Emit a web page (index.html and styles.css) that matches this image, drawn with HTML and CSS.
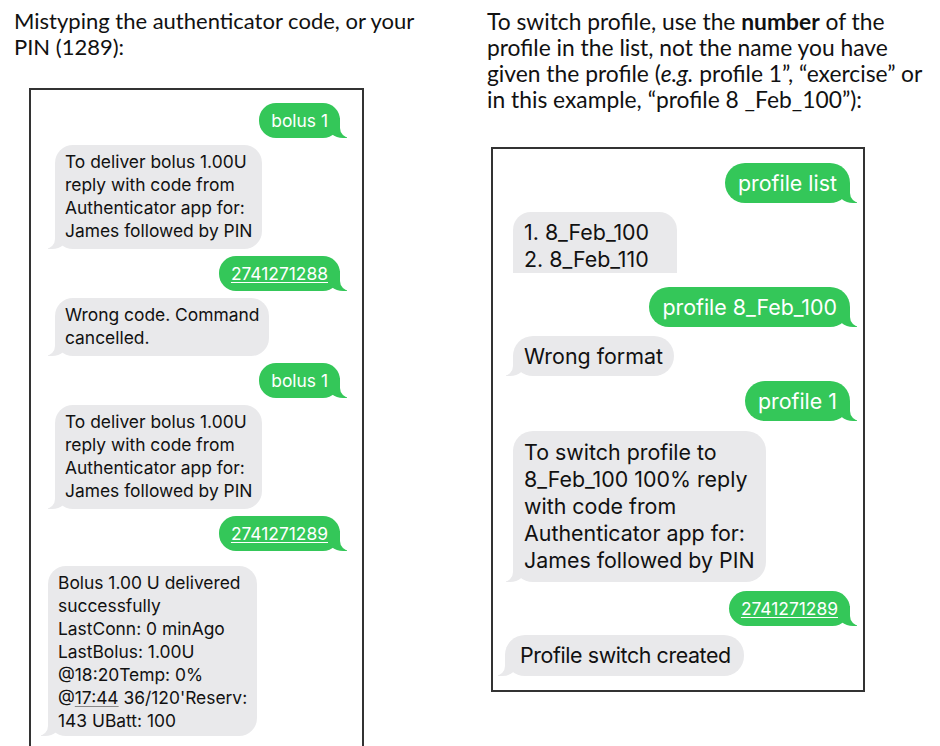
FILE: index.html
```html
<!DOCTYPE html>
<html lang="en">
<head>
<meta charset="utf-8">
<title>SMS commands</title>
<link rel="stylesheet" href="styles.css">
</head>
<body>
<main class="page">
  <section class="col col-left">
    <p class="heading">Mistyping the authenticator code, or your PIN (1289):</p>
    <div class="phone phone-left">
      <div class="msg sent">bolus 1</div>
      <div class="msg recv">To deliver bolus 1.00U<br>reply with code from<br>Authenticator app for:<br>James followed by PIN</div>
      <div class="msg sent"><u>2741271288</u></div>
      <div class="msg recv">Wrong code. Command<br>cancelled.</div>
      <div class="msg sent">bolus 1</div>
      <div class="msg recv">To deliver bolus 1.00U<br>reply with code from<br>Authenticator app for:<br>James followed by PIN</div>
      <div class="msg sent"><u>2741271289</u></div>
      <div class="msg recv recv-wide">Bolus 1.00 U delivered<br>successfully<br>LastConn: 0 minAgo<br>LastBolus: 1.00U<br>@18:20Temp: 0%<br>@<u class="dotted">17:44</u> 36/120'Reserv:<br>143 UBatt: 100</div>
    </div>
  </section>
  <section class="col col-right">
    <p class="heading">To switch profile, use the <b>number</b> of the profile in the list, not the name you have given the profile (<i>e.g.</i> profile 1”, “exercise” or in this example, “profile 8 _Feb_100”):</p>
    <div class="phone phone-right">
      <div class="msg sent">profile list</div>
      <div class="msg recv cut">1. 8_Feb_100<br>2. 8_Feb_110</div>
      <div class="msg sent">profile 8_Feb_100</div>
      <div class="msg recv">Wrong format</div>
      <div class="msg sent tight">profile 1</div>
      <div class="msg recv tall">To switch profile to<br>8_Feb_100 100% reply<br>with code from<br>Authenticator app for:<br>James followed by PIN</div>
      <div class="msg sent small"><u>2741271289</u></div>
      <div class="msg recv shift">Profile switch created</div>
    </div>
  </section>
</main>
</body>
</html>
```

FILE: styles.css
```css
html, body {
  margin: 0;
  padding: 0;
  background: #ffffff;
}

.page {
  display: flex;
  width: 940px;
  height: 746px;
  overflow: hidden;
}

.col-left {
  flex: 0 0 487px;
  padding-left: 14px;
  box-sizing: border-box;
}

.col-right {
  flex: 0 0 453px;
}

.heading {
  margin: 8px 0 0 0;
  font-family: Lato, "Liberation Sans", sans-serif;
  font-size: 22.8px;
  line-height: 26px;
  color: #111;
}

.col-left .heading { width: 410px; font-size: 22px; }
.col-right .heading { width: 445px; }

.phone {
  display: flex;
  flex-direction: column;
  align-items: flex-start;
  border: 2px solid #333;
  box-sizing: border-box;
  font-family: Inter, "Liberation Sans", sans-serif;
  color: #111;
}

.phone-left {
  margin: 28px 0 0 15px;
  width: 335px;
  height: 660px;
  padding: 13px 22px 0 24px;
  gap: 7px;
  font-size: 17.4px;
  line-height: 23px;
}

.phone-right {
  margin: 35px 0 0 4px;
  width: 374px;
  height: 545px;
  padding: 14px 13px 0 20px;
  gap: 9px;
  font-size: 21.4px;
  line-height: 27px;
}

.msg {
  position: relative;
  z-index: 0;
  border-radius: 18px;
  padding: 6px 11px;
}

.sent {
  align-self: flex-end;
  background: #34c759;
  color: #fff;
}

.recv {
  background: #e9e9eb;
  color: #111;
}

.phone-left .sent { padding: 6px 12px; border-radius: 17px; }
.phone-left .recv { padding: 5px 10px 7px 10px; }
.phone-left .recv-wide { margin-left: -7px; margin-top: 8px; padding: 5px 10px 4px 10px; }

.phone-right .sent { padding: 7px 13px 6px 13px; border-radius: 20px; }
.phone-right .recv { padding: 7px 11px 6px 11px; border-radius: 20px; }
.phone-right .tight { margin-top: -4px; }
.phone-right .tall { margin-top: 1px; padding: 8px 11px 8px 11px; }
.phone-right .small { font-size: 17.4px; line-height: 23px; padding: 6px 12px; border-radius: 18px; }
.phone-right .shift { margin-left: -8px; padding: 7px 13px 7px 15px; letter-spacing: -0.4px; }

.recv.cut {
  border-radius: 18px 18px 0 0;
  padding: 7px 28px 0 11px;
  margin-bottom: 5px;
}

u { text-decoration-thickness: 1px; text-underline-offset: 2px; }
u.dotted { text-decoration-color: #888; }

/* bubble tails */
.sent::before,
.recv::before {
  content: "";
  position: absolute;
  bottom: 0;
  width: 20px;
  height: 20px;
  z-index: -1;
}
.sent::after,
.recv::after {
  content: "";
  position: absolute;
  bottom: 0;
  width: 10px;
  height: 20px;
  background: #fff;
  z-index: -1;
}
.sent::before {
  right: -7px;
  background: #34c759;
  border-bottom-left-radius: 16px 14px;
}
.sent::after {
  right: -10px;
  border-bottom-left-radius: 10px;
}
.recv::before {
  left: -7px;
  background: #e9e9eb;
  border-bottom-right-radius: 16px 14px;
}
.recv::after {
  left: -10px;
  border-bottom-right-radius: 10px;
}
.recv.cut::before,
.recv.cut::after { display: none; }
```
